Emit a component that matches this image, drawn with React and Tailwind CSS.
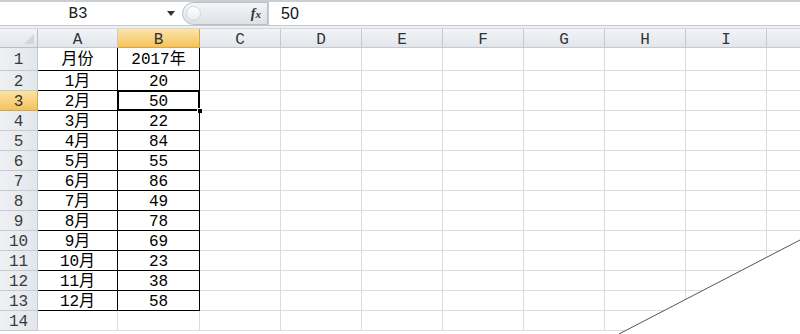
import React from "react";

const mono = { fontFamily: "'Liberation Mono','Noto Sans CJK SC',monospace" };
const data = [
  ["月份", "2017年"],
  ["1月", "20"],
  ["2月", "50"],
  ["3月", "22"],
  ["4月", "84"],
  ["5月", "55"],
  ["6月", "86"],
  ["7月", "49"],
  ["8月", "78"],
  ["9月", "69"],
  ["10月", "23"],
  ["11月", "38"],
  ["12月", "58"],
  ["", ""],
];
const rest = ["C", "D", "E", "F", "G", "H", "I", ""];

function RowHead({ n, sel }) {
  return (
    <div
      className={`w-[38px] shrink-0 flex items-center justify-center pt-[2px] border-r border-b text-[16px] ${
        sel
          ? "bg-gradient-to-b from-[#fbe3a3] to-[#f3c35c] border-[#d9a63e] text-[#333]"
          : "bg-gradient-to-r from-[#eef0f3] to-[#e3e7ec] border-[#c5cad1] text-[#3a3a3a]"
      }`}
      style={mono}
    >
      {n}
    </div>
  );
}

export default function App() {
  return (
    <div className="w-[800px] h-[334px] overflow-hidden bg-white relative" style={mono}>
      {/* formula bar */}
      <div className="h-[2px] bg-[#c9ced4]" />
      <div className="h-[23px] flex bg-white">
        <div className="w-[182px] shrink-0 relative flex items-center justify-center pr-[26px] text-[16px] text-[#222]">
          B3
          <div className="absolute left-[167px] top-[9px] w-0 h-0 border-l-[4px] border-r-[4px] border-t-[5px] border-l-transparent border-r-transparent border-t-[#333]" />
        </div>
        <div className="w-[86px] shrink-0 h-[23px] rounded-l-[12px] border border-[#b7bec6] bg-gradient-to-b from-[#f3f5f7] to-[#dde1e6] relative flex items-center justify-end pr-[6px]">
          <div className="absolute left-[3px] top-[3px] w-[15px] h-[15px] rounded-full border border-[#d3d7dc] bg-gradient-to-b from-[#ffffff] to-[#e8ebee]" />
          <span className="italic font-bold text-[14px] text-[#333]" style={{ fontFamily: "'Liberation Serif',serif" }}>
            f<span className="text-[11px]">x</span>
          </span>
        </div>
        <div className="flex-1 flex items-center pl-[12px] text-[16px] text-[#111] border-l border-[#c9ced4]" style={{ fontFamily: "'Liberation Sans',sans-serif" }}>
          50
        </div>
      </div>
      <div className="h-[4px] border-t border-[#c3c8ce] bg-[#eef0f3] border-b border-b-[#d3d7dc]" />

      {/* column header */}
      <div className="flex h-[19px]">
        <div className="w-[38px] shrink-0 border-r border-b border-[#b8bec6] bg-gradient-to-b from-[#f2f4f6] to-[#e2e6eb] relative">
          <div className="absolute right-[3px] bottom-[3px] w-0 h-0" style={{ borderBottom: "10px solid #d3d7dc", borderLeft: "10px solid transparent" }} />
        </div>
        <div className="w-[80px] shrink-0 border-r border-b border-[#c5cad1] bg-gradient-to-b from-[#f2f4f6] to-[#e2e6eb] flex items-center justify-center pt-[3px] text-[16px] text-[#333]">A</div>
        <div className="w-[82px] shrink-0 border-r border-b border-[#d9a63e] bg-gradient-to-b from-[#fbe4a8] to-[#f3c35c] flex items-center justify-center pt-[3px] text-[16px] text-[#333]">B</div>
        {rest.map((c, k) => (
          <div key={k} className="w-[81px] shrink-0 border-r border-b border-[#c5cad1] bg-gradient-to-b from-[#f2f4f6] to-[#e2e6eb] flex items-center justify-center pt-[3px] text-[16px] text-[#333]">
            {c}
          </div>
        ))}
      </div>

      {/* rows */}
      {data.map((r, i) => {
        const inTable = i < 13;
        const h = i === 0 ? "h-[23px]" : "h-[20px]";
        return (
          <div key={i} className={`flex ${h}`}>
            <RowHead n={i + 1} sel={i === 2} />
            <div className={`w-[80px] shrink-0 flex items-center justify-center pt-[2px] text-[16px] text-black border-r border-b ${inTable ? "border-black" : "border-[#dadcdd]"}`}>
              {r[0]}
            </div>
            <div className={`w-[82px] shrink-0 relative flex items-center justify-center pt-[2px] text-[16px] text-black border-r border-b ${inTable ? "border-black" : "border-[#dadcdd]"}`}>
              {r[1]}
              {i === 2 && (
                <>
                  <div className="absolute -left-[1px] -top-[1px] -right-[1px] -bottom-[1px] border-2 border-black" />
                  <div className="absolute -right-[4px] -bottom-[4px] w-[6px] h-[6px] bg-black border border-white" />
                </>
              )}
            </div>
            {rest.map((c, k) => (
              <div key={k} className="w-[81px] shrink-0 border-r border-b border-[#dadcdd]" />
            ))}
          </div>
        );
      })}

      {/* diagonal shape overlay */}
      <svg className="absolute left-0 top-0" width="800" height="334">
        <polygon points="619,334 800,240 800,334" fill="#ffffff" />
        <line x1="619" y1="334" x2="800" y2="240" stroke="#555" strokeWidth="1" />
      </svg>
    </div>
  );
}
